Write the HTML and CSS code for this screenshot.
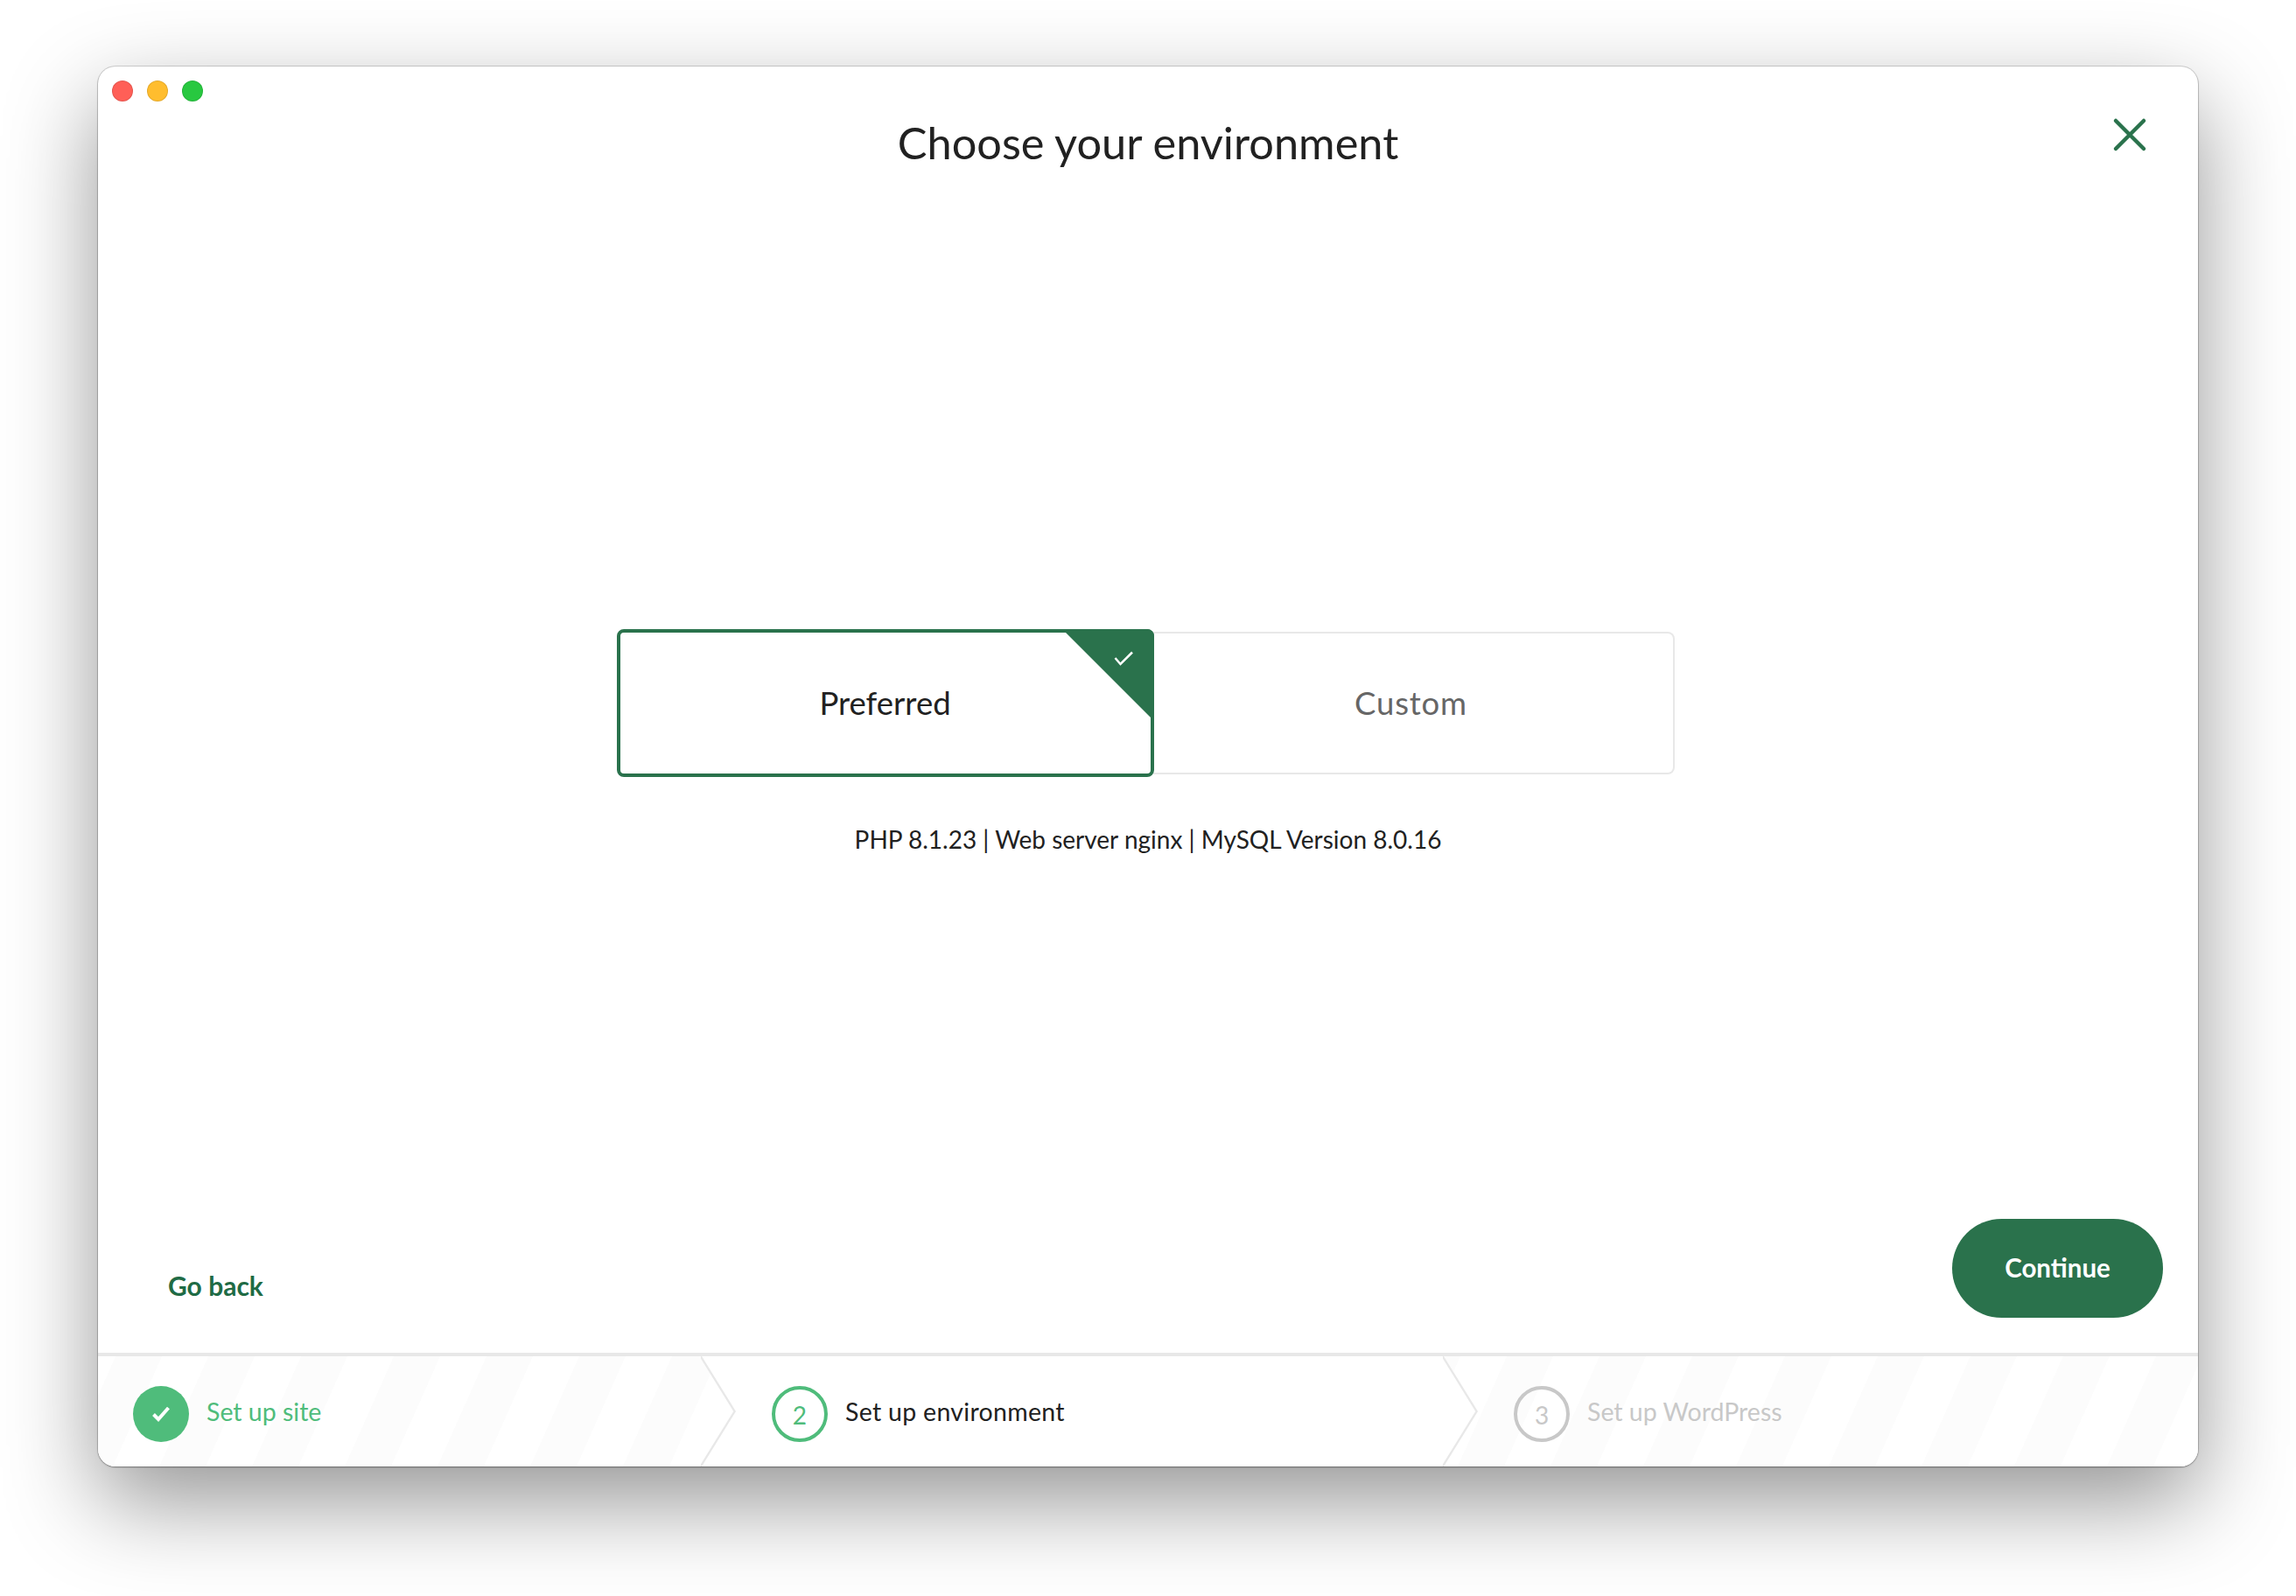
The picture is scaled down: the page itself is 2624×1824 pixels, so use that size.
FILE: index.html
```html
<!DOCTYPE html>
<html lang="en">
<head>
<meta charset="utf-8">
<title>Choose your environment</title>
<link rel="stylesheet" href="styles.css">
</head>
<body>
<div class="window">
  <div class="traffic">
    <span class="dot dot-red"></span>
    <span class="dot dot-amber"></span>
    <span class="dot dot-green"></span>
  </div>
  <button class="close" aria-label="Close">
    <svg width="40" height="40" viewBox="0 0 40 40"><path d="M4 4 L36 36 M36 4 L4 36" fill="none" stroke="#2a724c" stroke-width="4.500" stroke-linecap="round"/></svg>
  </button>
  <h1 class="title">Choose your environment</h1>
  <div class="content">
    <div class="tiles">
      <div class="tile tile-on">
        <span>Preferred</span>
        <svg class="corner" width="105" height="105" viewBox="0 0 105 105"><path d="M0 0 H105 V105 Z" fill="#2a724c"/><path d="M60.500 33 L66.500 40 L80 26.500" fill="none" stroke="#fff" stroke-width="2.500"/></svg>
      </div>
      <div class="tile tile-off"><span>Custom</span></div>
    </div>
    <p class="info">PHP 8.1.23 | Web server nginx | MySQL Version 8.0.16</p>
  </div>
  <div class="actions">
    <a class="back">Go back</a>
    <button class="continue">Continue</button>
  </div>
  <div class="steps">
    <div class="step step-done">
      <span class="badge badge-done"><svg width="24" height="24" viewBox="0 0 24 24"><path d="M3.500 12.500 L9 18 L20.500 5" fill="none" stroke="#fff" stroke-width="4"/></svg></span>
      <span class="label">Set up site</span>
      <svg class="chev" width="40" height="126" viewBox="0 0 40 126"><path d="M0 0 L39 63 L0 126" fill="none" stroke="#e8e8e8" stroke-width="3"/></svg>
    </div>
    <div class="step step-now">
      <span class="badge badge-now">2</span>
      <span class="label">Set up environment</span>
      <svg class="chev" width="40" height="126" viewBox="0 0 40 126"><path d="M0 0 L39 63 L0 126" fill="none" stroke="#e8e8e8" stroke-width="3"/></svg>
    </div>
    <div class="step step-next">
      <span class="badge badge-next">3</span>
      <span class="label">Set up WordPress</span>
    </div>
  </div>
</div>
</body>
</html>
```
FILE: styles.css
```css
* { box-sizing: border-box; }
html, body { margin: 0; height: 100%; background: #fff; }
body {
  padding-top: 76px;
  display: flex;
  justify-content: center;
  align-items: flex-start;
  overflow: hidden;
  font-family: "Lato", "Noto Sans", sans-serif;
  color: #212121;
}
.window {
  position: relative;
  width: 2400px;
  height: 1600px;
  display: flex;
  flex-direction: column;
  background: #fff;
  border-radius: 20px;
  overflow: hidden;
  box-shadow: 0 40px 104px rgba(0,0,0,.42), 0 0 0 1px rgba(0,0,0,.14), 0 1px 2px rgba(0,0,0,.3);
}
.traffic {
  position: absolute;
  left: 16px;
  top: 16px;
  display: flex;
  gap: 16px;
}
.dot {
  width: 24px;
  height: 24px;
  border-radius: 50%;
  border: 1px solid rgba(0,0,0,.1);
}
.dot-red { background: #ff5f57; }
.dot-amber { background: #ffbd2e; }
.dot-green { background: #28c840; }
.close {
  position: absolute;
  right: 58px;
  top: 58px;
  padding: 0;
  border: 0;
  background: none;
  display: flex;
}
.title {
  margin: 0;
  padding-top: 59px;
  height: 180px;
  text-align: center;
  font-size: 50.500px;
  line-height: 56px;
  font-weight: 400;
}
.content {
  flex: 1;
  padding-top: 463px;
  display: flex;
  flex-direction: column;
  align-items: center;
}
.tiles { display: flex; align-items: center; margin-right: 6px; }
.tile {
  position: relative;
  height: 169px;
  display: flex;
  align-items: center;
  justify-content: center;
  font-size: 36.500px;
  padding-bottom: 2px;
}
.tile-on {
  width: 614px;
  border: 4px solid #2a724c;
  border-radius: 8px;
  z-index: 1;
}
.tile-off {
  width: 596px;
  height: 163px;
  margin-left: -1px;
  padding-right: 4px;
  letter-spacing: .8px;
  border: 2px solid #e8e8e8;
  border-left: 0;
  border-radius: 0 8px 8px 0;
  color: #666;
}
.corner { position: absolute; top: -4px; right: -4px; border-top-right-radius: 8px; }
.info { margin: 53px 0 0; font-size: 28px; line-height: 36px; }
.actions {
  display: flex;
  justify-content: space-between;
  align-items: flex-end;
  padding: 0 40px 40px 80px;
}
.back { font-size: 30px; font-weight: 700; line-height: 36px; color: #1f6b45; margin-bottom: 19px; }
.continue {
  width: 241px;
  height: 113px;
  border: 0;
  border-radius: 57px;
  padding-bottom: 3px;
  background: #2a724c;
  color: #fff;
  font: 700 29.500px "Lato", "Noto Sans", sans-serif;
}
.steps {
  height: 130px;
  border-top: 4px solid #e8e8e8;
  display: flex;
}
.step {
  position: relative;
  height: 126px;
  display: flex;
  align-items: center;
  gap: 20px;
  font-size: 28.500px;
}
.step-done {
  width: 729px;
  padding-left: 40px;
  z-index: 3;
  color: #4fbc7b;
  background: repeating-linear-gradient(114deg, #fff 0 18.400px, #fcfcfc 18.400px 66.800px, #fff 66.800px 96.800px);
  clip-path: polygon(0 0, 690px 0, 729px 63px, 690px 100%, 0 100%);
}
.step-now {
  width: 887px;
  margin-left: -39px;
  padding-left: 80px;
  z-index: 2;
  letter-spacing: .3px;
  background: #fff;
  clip-path: polygon(0 0, 848px 0, 887px 63px, 848px 100%, 0 100%);
}
.step-next {
  flex: 1;
  margin-left: -39px;
  padding-left: 80px;
  z-index: 1;
  color: #c8c8c8;
  background: repeating-linear-gradient(114deg, #fcfcfc 0 17.400px, #fff 17.400px 65.800px, #fcfcfc 65.800px 96.800px);
}
.chev { position: absolute; right: 0; top: 0; }
.badge {
  width: 64px;
  height: 64px;
  flex: none;
  border-radius: 50%;
  display: flex;
  align-items: center;
  justify-content: center;
  font-size: 28px;
  position: relative;
  top: 3px;
  padding-top: 2px;
}
.badge-done { background: #4fbc7b; padding-top: 0; }
.badge-now { border: 4px solid #4fbc7b; color: #4fbc7b; }
.badge-next { border: 4px solid #c8c8c8; color: #c8c8c8; }
```
